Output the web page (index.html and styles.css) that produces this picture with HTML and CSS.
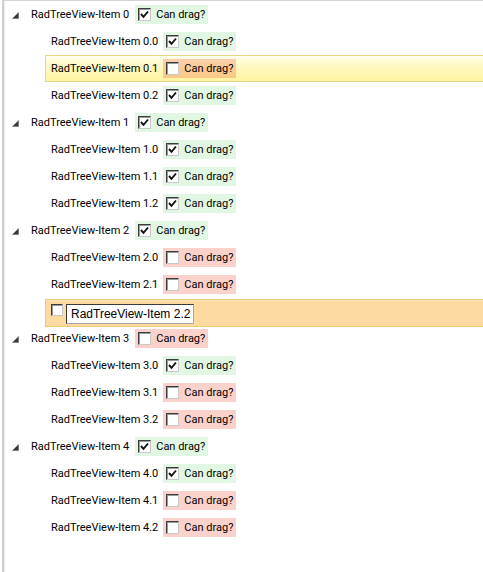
FILE: index.html
```html
<!DOCTYPE html>
<html lang="en">
<head>
<meta charset="utf-8">
<title>RadTreeView drag options</title>
<link rel="stylesheet" href="styles.css">
</head>
<body>
<div class="tree">
  <!-- Item 0 -->
  <div class="row root">
    <span class="toggle"><svg width="7" height="7" viewBox="0 0 7 7"><polygon points="6.5,0.5 6.5,6.5 0.5,6.5" /></svg></span>
    <span class="item"><span class="label">RadTreeView-Item 0</span><span class="drag on"><span class="cb"><svg viewBox="0 0 11 11"><polyline points="2,5 4.5,7.8 9,2.5" /></svg></span><span>Can drag?</span></span></span>
  </div>
  <div class="row child">
    <span class="item"><span class="label">RadTreeView-Item 0.0</span><span class="drag on"><span class="cb"><svg viewBox="0 0 11 11"><polyline points="2,5 4.5,7.8 9,2.5" /></svg></span><span>Can drag?</span></span></span>
  </div>
  <div class="row child">
    <span class="item hover"><span class="label">RadTreeView-Item 0.1</span><span class="drag off"><span class="cb"></span><span>Can drag?</span></span></span>
  </div>
  <div class="row child">
    <span class="item"><span class="label">RadTreeView-Item 0.2</span><span class="drag on"><span class="cb"><svg viewBox="0 0 11 11"><polyline points="2,5 4.5,7.8 9,2.5" /></svg></span><span>Can drag?</span></span></span>
  </div>

  <!-- Item 1 -->
  <div class="row root">
    <span class="toggle"><svg width="7" height="7" viewBox="0 0 7 7"><polygon points="6.5,0.5 6.5,6.5 0.5,6.5" /></svg></span>
    <span class="item"><span class="label">RadTreeView-Item 1</span><span class="drag on"><span class="cb"><svg viewBox="0 0 11 11"><polyline points="2,5 4.5,7.8 9,2.5" /></svg></span><span>Can drag?</span></span></span>
  </div>
  <div class="row child">
    <span class="item"><span class="label">RadTreeView-Item 1.0</span><span class="drag on"><span class="cb"><svg viewBox="0 0 11 11"><polyline points="2,5 4.5,7.8 9,2.5" /></svg></span><span>Can drag?</span></span></span>
  </div>
  <div class="row child">
    <span class="item"><span class="label">RadTreeView-Item 1.1</span><span class="drag on"><span class="cb"><svg viewBox="0 0 11 11"><polyline points="2,5 4.5,7.8 9,2.5" /></svg></span><span>Can drag?</span></span></span>
  </div>
  <div class="row child">
    <span class="item"><span class="label">RadTreeView-Item 1.2</span><span class="drag on"><span class="cb"><svg viewBox="0 0 11 11"><polyline points="2,5 4.5,7.8 9,2.5" /></svg></span><span>Can drag?</span></span></span>
  </div>

  <!-- Item 2 -->
  <div class="row root">
    <span class="toggle"><svg width="7" height="7" viewBox="0 0 7 7"><polygon points="6.5,0.5 6.5,6.5 0.5,6.5" /></svg></span>
    <span class="item"><span class="label">RadTreeView-Item 2</span><span class="drag on"><span class="cb"><svg viewBox="0 0 11 11"><polyline points="2,5 4.5,7.8 9,2.5" /></svg></span><span>Can drag?</span></span></span>
  </div>
  <div class="row child">
    <span class="item"><span class="label">RadTreeView-Item 2.0</span><span class="drag off"><span class="cb"></span><span>Can drag?</span></span></span>
  </div>
  <div class="row child">
    <span class="item"><span class="label">RadTreeView-Item 2.1</span><span class="drag off"><span class="cb"></span><span>Can drag?</span></span></span>
  </div>
  <div class="row child">
    <span class="item editing"><span class="cb small"></span><span class="editor">RadTreeView-Item 2.2</span></span>
  </div>

  <!-- Item 3 -->
  <div class="row root">
    <span class="toggle"><svg width="7" height="7" viewBox="0 0 7 7"><polygon points="6.5,0.5 6.5,6.5 0.5,6.5" /></svg></span>
    <span class="item"><span class="label">RadTreeView-Item 3</span><span class="drag off"><span class="cb"></span><span>Can drag?</span></span></span>
  </div>
  <div class="row child">
    <span class="item"><span class="label">RadTreeView-Item 3.0</span><span class="drag on"><span class="cb"><svg viewBox="0 0 11 11"><polyline points="2,5 4.5,7.8 9,2.5" /></svg></span><span>Can drag?</span></span></span>
  </div>
  <div class="row child">
    <span class="item"><span class="label">RadTreeView-Item 3.1</span><span class="drag off"><span class="cb"></span><span>Can drag?</span></span></span>
  </div>
  <div class="row child">
    <span class="item"><span class="label">RadTreeView-Item 3.2</span><span class="drag off"><span class="cb"></span><span>Can drag?</span></span></span>
  </div>

  <!-- Item 4 -->
  <div class="row root">
    <span class="toggle"><svg width="7" height="7" viewBox="0 0 7 7"><polygon points="6.5,0.5 6.5,6.5 0.5,6.5" /></svg></span>
    <span class="item"><span class="label">RadTreeView-Item 4</span><span class="drag on"><span class="cb"><svg viewBox="0 0 11 11"><polyline points="2,5 4.5,7.8 9,2.5" /></svg></span><span>Can drag?</span></span></span>
  </div>
  <div class="row child">
    <span class="item"><span class="label">RadTreeView-Item 4.0</span><span class="drag on"><span class="cb"><svg viewBox="0 0 11 11"><polyline points="2,5 4.5,7.8 9,2.5" /></svg></span><span>Can drag?</span></span></span>
  </div>
  <div class="row child">
    <span class="item"><span class="label">RadTreeView-Item 4.1</span><span class="drag off"><span class="cb"></span><span>Can drag?</span></span></span>
  </div>
  <div class="row child">
    <span class="item"><span class="label">RadTreeView-Item 4.2</span><span class="drag off"><span class="cb"></span><span>Can drag?</span></span></span>
  </div>
</div>
</body>
</html>
```

FILE: styles.css
```css
html, body {
  margin: 0;
  padding: 0;
  background: #ffffff;
  height: 100%;
}

body {
  font-family: Roboto, "Liberation Sans", Arial, sans-serif;
  font-size: 11px;
  color: #000000;
}

/* tree frame: grey rule on the top and a doubled rule on the left */
.tree {
  box-sizing: border-box;
  min-height: 100%;
  margin-left: 2px;
  border-left: 2px solid #cfcfcf;
  border-top: 1px solid #d4d4d4;
  box-shadow: inset 1px 0 0 #ececec;
}

.row {
  display: flex;
  height: 27px;
}

.root {
  padding-left: 0;
}

.child {
  padding-left: 41px;
}

.toggle {
  display: flex;
  align-items: center;
  width: 27px;
  padding-left: 8px;
  padding-top: 2px;
  box-sizing: border-box;
  flex: none;
}

.toggle svg {
  display: block;
}

.toggle polygon {
  fill: #3a3a3a;
  stroke: #6a6a6a;
  stroke-width: 0.6;
}

.item {
  display: flex;
  align-items: center;
  flex: 1;
  box-sizing: border-box;
  white-space: nowrap;
}

.child .item {
  padding-left: 5px;
  border: 1px solid transparent;
  border-right: 0;
}

.item.hover {
  background: linear-gradient(to bottom, #fffdea 0%, #fff8bf 45%, #fff4a2 100%);
  border-color: #e6d488;
  box-shadow: inset 0 1px 0 #fffef6;
}

.item.editing {
  align-items: flex-start;
  padding-top: 4px;
  margin-top: 1px;
  height: 28px;
  background: #fddba0;
  border-color: #ebcb78;
  box-shadow: inset 0 1px 0 #fee7bd;
}

/* "Can drag?" chip: green when dragging is allowed, red when not */
.drag {
  display: flex;
  align-items: center;
  gap: 5px;
  height: 19px;
  margin-left: 6px;
  padding: 0 3px 0 3px;
}

.child .drag {
  margin-left: 5px;
}

.drag.on {
  background: rgba(30, 190, 40, 0.13);
}

.drag.off {
  background: rgba(235, 40, 10, 0.21);
}

.cb {
  display: block;
  width: 13px;
  height: 13px;
  box-sizing: border-box;
  background: #ffffff;
  border-top: 1px solid #3c3c3c;
  border-left: 1px solid #3c3c3c;
  border-right: 1px solid #c9c9c9;
  border-bottom: 1px solid #c9c9c9;
  box-shadow: inset 1px 1px 0 #9a9a9a;
  flex: none;
}

.cb svg {
  display: block;
  width: 11px;
  height: 11px;
}

.cb polyline {
  fill: none;
  stroke: #111111;
  stroke-width: 1.9;
}

.cb.small {
  width: 12px;
  height: 12px;
}

.editor {
  display: block;
  margin-left: 3px;
  width: 128px;
  height: 20px;
  box-sizing: border-box;
  padding: 1px 0 0 4px;
  background: #ffffff;
  border-top: 1px solid #3a3a3a;
  border-left: 1px solid #3a3a3a;
  border-right: 1px solid #a8a8a8;
  border-bottom: 1px solid #a8a8a8;
  font-family: "Liberation Sans", Arial, sans-serif;
  font-size: 12px;
  line-height: 17px;
}
```
